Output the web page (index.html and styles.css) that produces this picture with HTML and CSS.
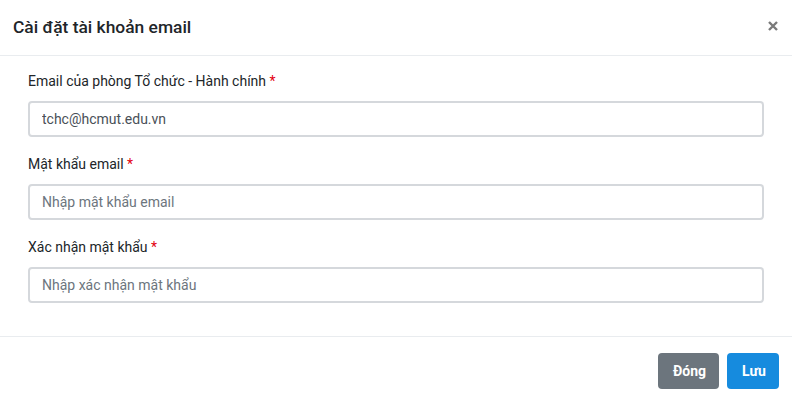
FILE: index.html
```html
<!DOCTYPE html>
<html lang="vi">
<head>
<meta charset="utf-8">
<title>Cài đặt tài khoản email</title>
<link rel="stylesheet" href="styles.css">
</head>
<body>
<div class="modal">
  <div class="modal-header">
    <h5 class="modal-title">Cài đặt tài khoản email</h5>
    <button class="close" type="button" aria-label="Close">
      <svg width="10" height="10" viewBox="0 0 10 10"><path d="M1 1L9 9M9 1L1 9" stroke="#7a7a7a" stroke-width="2.4" stroke-linecap="butt"/></svg>
    </button>
  </div>
  <div class="modal-body">
    <div class="form-group">
      <label class="label">Email của phòng Tổ chức - Hành chính <span class="req">*</span></label>
      <input class="input" type="text" value="tchc@hcmut.edu.vn">
    </div>
    <div class="form-group">
      <label class="label">Mật khẩu email <span class="req">*</span></label>
      <input class="input" type="text" placeholder="Nhập mật khẩu email">
    </div>
    <div class="form-group">
      <label class="label">Xác nhận mật khẩu <span class="req">*</span></label>
      <input class="input" type="text" placeholder="Nhập xác nhận mật khẩu">
    </div>
  </div>
  <div class="modal-footer">
    <button class="btn btn-secondary" type="button">Đóng</button>
    <button class="btn btn-primary" type="button">Lưu</button>
  </div>
</div>
</body>
</html>
```
FILE: styles.css
```css
* { box-sizing: border-box; }
html, body { margin: 0; padding: 0; background: #fff; }
body { font-family: Roboto, "Liberation Sans", sans-serif; color: #212529; font-size: 14px; }
.modal { width: 792px; height: 405px; display: flex; flex-direction: column; }
.modal-header {
  height: 56px; display: flex; align-items: center; justify-content: space-between;
  padding: 0 14px 0 13px; border-bottom: 1px solid #e9ecef;
}
.modal-title { margin: 0; font-size: 17.4px; font-weight: 500; line-height: 22px; color: #212529; padding-bottom: 2px; }
.close { border: 0; background: none; padding: 0; width: 10px; height: 10px; display: flex; cursor: pointer; margin-bottom: 3px; }
.modal-body { padding: 15px 28px 0 28px; flex: 1; }
.form-group { display: flex; flex-direction: column; margin-bottom: 17px; }
.label { font-size: 14px; line-height: 20px; margin-bottom: 10px; color: #212529; }
.req { color: #e3000f; }
.input {
  height: 36px; width: 736px; border: 2px solid #d5d8dc; border-radius: 4px;
  padding: 0 12px; font-family: inherit; font-size: 14px; color: #495057; background: #fff; outline: none;
}
.input::placeholder { color: #6c757d; opacity: 1; }
.modal-footer {
  height: 69px; border-top: 1px solid #e9ecef; display: flex; justify-content: flex-end;
  align-items: flex-start; gap: 8px; padding: 16px 13px 0 0;
}
.btn {
  height: 36px; border: 0; border-radius: 4px; color: #fff; font-family: inherit;
  font-size: 14px; font-weight: 700; padding: 0 15px; cursor: pointer; line-height: 36px;
}
.btn-secondary { background: #6c757d; width: 61px; }
.btn-primary { background: #168bde; width: 52px; }
```
